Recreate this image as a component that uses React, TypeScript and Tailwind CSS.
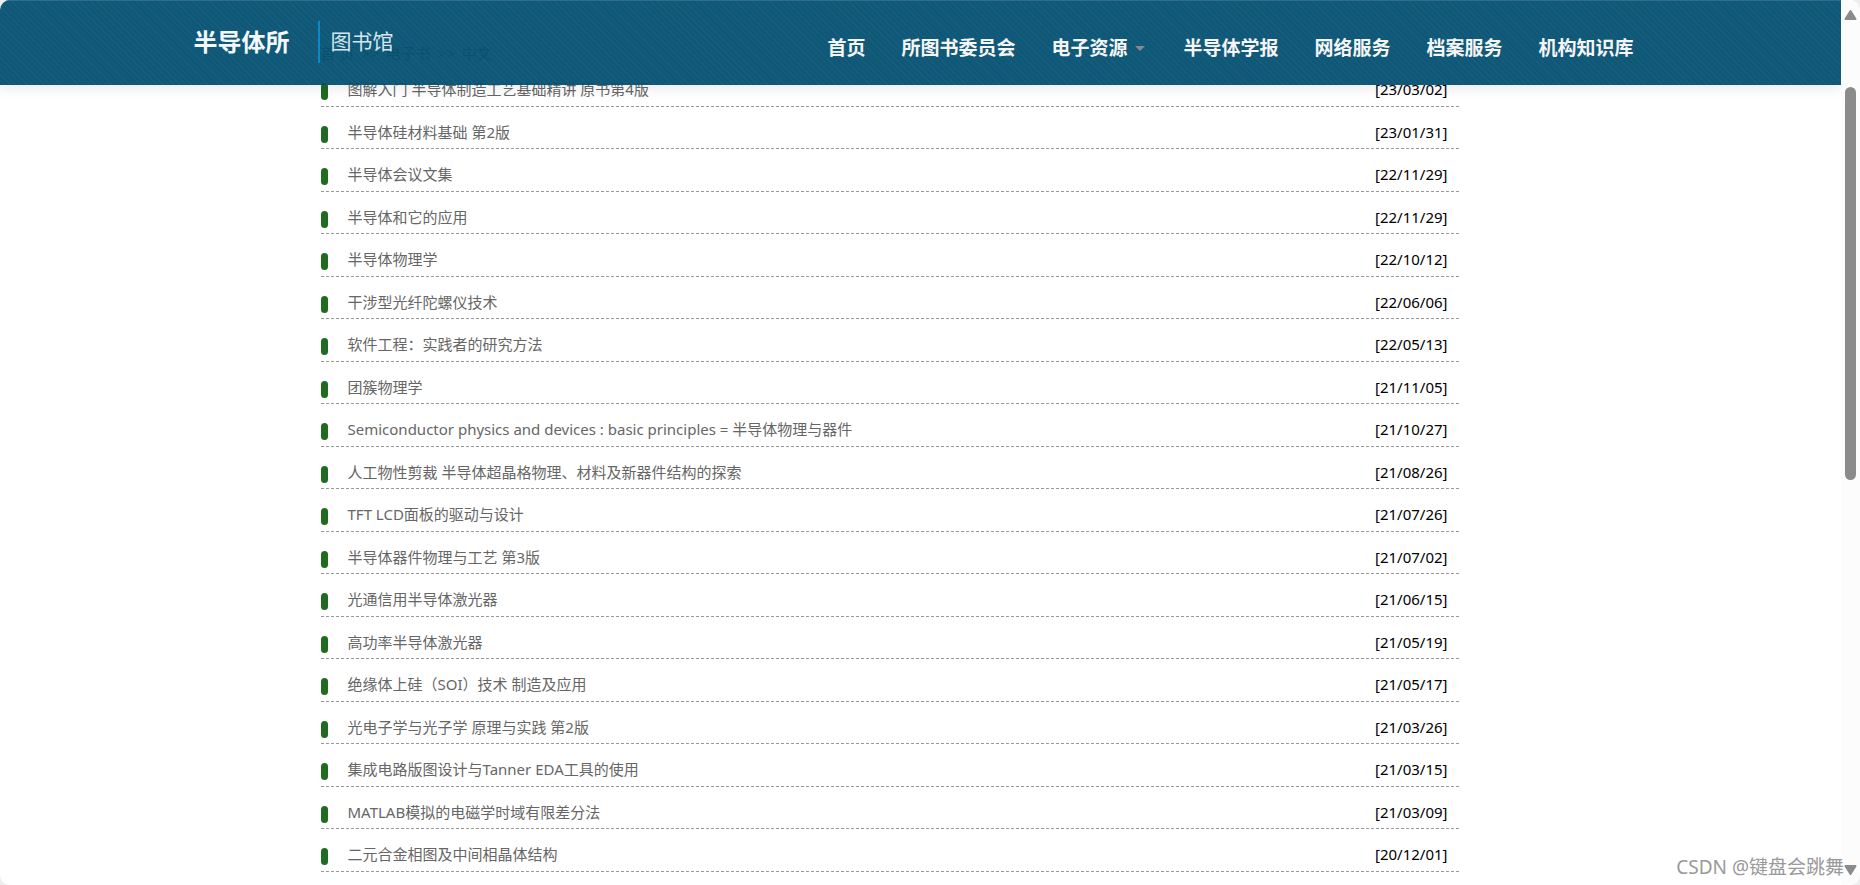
const navItems = [
  { label: '首页' },
  { label: '所图书委员会' },
  { label: '电子资源', dropdown: true },
  { label: '半导体学报' },
  { label: '网络服务' },
  { label: '档案服务' },
  { label: '机构知识库' },
]

const books = [
  { title: '图解入门 半导体制造工艺基础精讲 原书第4版', date: '23/03/02' },
  { title: '半导体硅材料基础 第2版', date: '23/01/31' },
  { title: '半导体会议文集', date: '22/11/29' },
  { title: '半导体和它的应用', date: '22/11/29' },
  { title: '半导体物理学', date: '22/10/12' },
  { title: '干涉型光纤陀螺仪技术', date: '22/06/06' },
  { title: '软件工程：实践者的研究方法', date: '22/05/13' },
  { title: '团簇物理学', date: '21/11/05' },
  { title: 'Semiconductor physics and devices : basic principles = 半导体物理与器件', date: '21/10/27' },
  { title: '人工物性剪裁 半导体超晶格物理、材料及新器件结构的探索', date: '21/08/26' },
  { title: 'TFT LCD面板的驱动与设计', date: '21/07/26' },
  { title: '半导体器件物理与工艺 第3版', date: '21/07/02' },
  { title: '光通信用半导体激光器', date: '21/06/15' },
  { title: '高功率半导体激光器', date: '21/05/19' },
  { title: '绝缘体上硅（SOI）技术 制造及应用', date: '21/05/17' },
  { title: '光电子学与光子学 原理与实践 第2版', date: '21/03/26' },
  { title: '集成电路版图设计与Tanner EDA工具的使用', date: '21/03/15' },
  { title: 'MATLAB模拟的电磁学时域有限差分法', date: '21/03/09' },
  { title: '二元合金相图及中间相晶体结构', date: '20/12/01' },
]

function Header() {
  return (
    <header className="sticky top-0 z-10 h-[85px] border-t border-[#2f6c89] bg-[#024f71]/95 bg-[repeating-linear-gradient(45deg,transparent_0px,transparent_3px,rgba(255,255,255,0.03)_3px,rgba(255,255,255,0.03)_4px)] shadow-[0_4px_12px_rgba(0,0,0,0.08)]">
      <div className="mx-auto flex h-full max-w-[1462px] items-center justify-between pr-[18px] pl-1">
        <a href="#" className="flex items-center pb-[2px] text-[#f4f8fa]">
          <span className="text-[24px] leading-8 font-bold">半导体所</span>
          <span className="ml-7 flex h-[42px] items-center border-l-2 border-[#0c87c9] pl-[11px] text-[21px] text-[#d5e6ee]">
            图书馆
          </span>
        </a>
        <nav className="flex items-center gap-9 pt-[10px]">
          {navItems.map((item) => (
            <a key={item.label} href="#" className="flex items-center text-[19px] leading-7 font-bold text-[#f5f5f5]">
              {item.label}
              {item.dropdown && (
                <span className="mr-[2px] ml-2 border-x-[5px] border-t-[5px] border-x-transparent border-t-[#888]"></span>
              )}
            </a>
          ))}
        </nav>
      </div>
    </header>
  )
}

// Scrolled up behind the translucent header
function Breadcrumb() {
  return (
    <div className="flex h-[22px] items-center gap-[7px] text-[15px] leading-5 text-[#555]">
      <span>首 页</span>
      <span>&gt;&gt;</span>
      <span>电子书</span>
      <span>&gt;&gt;</span>
      <span>中文</span>
    </div>
  )
}

function BookList() {
  return (
    <ul>
      {books.map((book) => (
        <li
          key={book.title}
          className="flex items-start border-b border-dashed border-[#999] pt-[13px] text-[15px] leading-6 odd:h-[43px] even:h-[42px]"
        >
          <span className="mt-[6px] h-[17px] w-[7px] shrink-0 rounded-full bg-[#1f6b1f]"></span>
          <a href="#" className="ml-5 flex-1 text-[#666]">{book.title}</a>
          <span className="mr-[11px] text-black">[{book.date}]</span>
        </li>
      ))}
    </ul>
  )
}

function Scrollbar() {
  return (
    <div className="flex w-[19px] shrink-0 flex-col items-center rounded-r-[10px] bg-[#fcfcfc] py-[9px]">
      <svg width="13" height="11" viewBox="0 0 13 11" className="shrink-0">
        <path d="M6.5 2 L11.5 10 H1.5 Z" fill="#8b8b8b" stroke="#8b8b8b" strokeWidth="2" strokeLinejoin="round" />
      </svg>
      <div className="mt-[67px] h-[393px] w-[11px] rounded-full bg-[#8b8b8b]"></div>
      <svg width="13" height="11" viewBox="0 0 13 11" className="mt-auto shrink-0">
        <path d="M6.5 9 L11.5 1 H1.5 Z" fill="#8b8b8b" stroke="#8b8b8b" strokeWidth="2" strokeLinejoin="round" />
      </svg>
    </div>
  )
}

export default function App() {
  return (
    <div className="bg-[#eee] font-['Noto_Sans','Noto_Sans_CJK_SC',sans-serif]">
      <div className="relative flex h-screen overflow-hidden rounded-[10px] bg-white">
        <div className="min-w-0 flex-1 overflow-hidden">
          <Header />
          <main className="mx-auto -mt-[43px] max-w-[1462px] pr-[193px] pl-[131px]">
            <Breadcrumb />
            <BookList />
          </main>
        </div>
        <Scrollbar />
        <span className="absolute right-4 bottom-1 text-[19px] leading-7 text-[#999]">CSDN @键盘会跳舞</span>
      </div>
    </div>
  )
}
